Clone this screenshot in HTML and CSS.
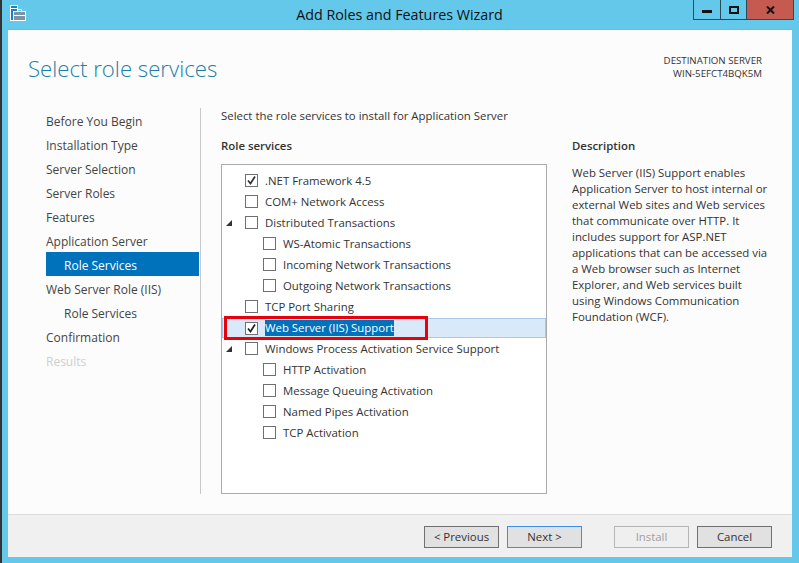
FILE: index.html
```html
<!DOCTYPE html>
<html lang="en">
<head>
<meta charset="utf-8">
<title>Add Roles and Features Wizard</title>
<link rel="stylesheet" href="styles.css">
</head>
<body>
<div class="window">
  <header class="titlebar">
    <svg class="appicon" width="16" height="16" viewBox="0 0 16 16">
      <rect x=".5" y=".5" width="7" height="15" fill="#1a7fc4" stroke="#fff"/>
      <path d="M1 3.500h6" stroke="#fff"/>
      <rect x="3.500" y="6.500" width="12" height="9" fill="#7f93a6" stroke="#fff"/>
      <path d="M7.500 6V4.500h4V6M4 10.500h11" fill="none" stroke="#fff"/>
    </svg>
    <div class="wintitle">Add Roles and Features Wizard</div>
    <div class="controls">
      <div class="ctl ctl-min"><span class="glyph-min"></span></div>
      <div class="ctl ctl-max"><span class="glyph-max"></span></div>
      <div class="ctl ctl-close">
        <svg width="9" height="8" viewBox="0 0 9 8"><path d="M1 .5l7 7M8 .5l-7 7" stroke="#111" stroke-width="2" fill="none"/></svg>
      </div>
    </div>
  </header>
  <main class="panel">
    <div class="content">
      <div class="head">
        <h1 class="pagetitle">Select role services</h1>
        <div class="dest">DESTINATION SERVER<br>WIN-5EFCT4BQK5M</div>
      </div>
      <div class="columns">
        <nav class="nav">
          <div class="navitem">Before You Begin</div>
          <div class="navitem">Installation Type</div>
          <div class="navitem">Server Selection</div>
          <div class="navitem">Server Roles</div>
          <div class="navitem">Features</div>
          <div class="navitem">Application Server</div>
          <div class="navitem sub active">Role Services</div>
          <div class="navitem">Web Server Role (IIS)</div>
          <div class="navitem sub">Role Services</div>
          <div class="navitem">Confirmation</div>
          <div class="navitem disabled">Results</div>
        </nav>
        <section class="main">
          <p class="intro">Select the role services to install for Application Server</p>
          <div class="split">
            <div class="services">
              <h2 class="label">Role services</h2>
              <div class="tree">
                <div class="row"><span class="arrow"></span><span class="cb checked"><svg width="11" height="11" viewBox="0 0 11 11"><path d="M2 5.500l2.500 3L9 1.500" fill="none" stroke="#333" stroke-width="1.700"/></svg></span><span>.NET Framework 4.5</span></div>
                <div class="row"><span class="arrow"></span><span class="cb"></span><span>COM+ Network Access</span></div>
                <div class="row"><span class="arrow on"></span><span class="cb"></span><span>Distributed Transactions</span></div>
                <div class="row child"><span class="arrow"></span><span class="cb"></span><span>WS-Atomic Transactions</span></div>
                <div class="row child"><span class="arrow"></span><span class="cb"></span><span>Incoming Network Transactions</span></div>
                <div class="row child"><span class="arrow"></span><span class="cb"></span><span>Outgoing Network Transactions</span></div>
                <div class="row"><span class="arrow"></span><span class="cb"></span><span>TCP Port Sharing</span></div>
                <div class="row selected"><span class="arrow"></span><span class="cb checked"><svg width="11" height="11" viewBox="0 0 11 11"><path d="M2 5.500l2.500 3L9 1.500" fill="none" stroke="#222" stroke-width="1.700"/></svg></span><span class="sel">Web Server (IIS) Support</span>
                  <div class="callout"></div>
                </div>
                <div class="row"><span class="arrow on"></span><span class="cb"></span><span>Windows Process Activation Service Support</span></div>
                <div class="row child"><span class="arrow"></span><span class="cb"></span><span>HTTP Activation</span></div>
                <div class="row child"><span class="arrow"></span><span class="cb"></span><span>Message Queuing Activation</span></div>
                <div class="row child"><span class="arrow"></span><span class="cb"></span><span>Named Pipes Activation</span></div>
                <div class="row child"><span class="arrow"></span><span class="cb"></span><span>TCP Activation</span></div>
              </div>
            </div>
            <aside class="desc">
              <h2 class="label">Description</h2>
              <p class="desctext">Web Server (IIS) Support enables<br>Application Server to host internal or<br>external Web sites and Web services<br>that communicate over HTTP. It<br>includes support for ASP.NET<br>applications that can be accessed via<br>a Web browser such as Internet<br>Explorer, and Web services built<br>using Windows Communication<br>Foundation (WCF).</p>
            </aside>
          </div>
        </section>
      </div>
    </div>
    <footer class="footer">
      <button class="btn">&lt; Previous</button>
      <button class="btn default">Next &gt;</button>
      <button class="btn off gap">Install</button>
      <button class="btn">Cancel</button>
    </footer>
  </main>
</div>
</body>
</html>
```
FILE: styles.css
```css
* { box-sizing: border-box; }
html, body { margin: 0; padding: 0; }
body {
  width: 799px;
  height: 563px;
  overflow: hidden;
  font-family: "Open Sans", "Noto Sans", sans-serif;
  font-size: 11.4px;
  color: #333;
}
.window {
  width: 799px;
  height: 563px;
  background: #63c8ea;
  border-left: 2px solid #333;
  padding: 0 7px 6px 6px;
  display: flex;
  flex-direction: column;
}
.titlebar {
  height: 29px;
  flex: none;
  display: flex;
  position: relative;
  justify-content: center;
  margin-right: -7px;
  margin-left: -6px;
}
.appicon { position: absolute; left: 8px; top: 5px; }
.wintitle { font-size: 14.3px; color: #111; line-height: 29px; padding-right: 2px; }
.controls {
  position: absolute;
  left: 691px;
  top: 0;
  height: 20px;
  display: flex;
  border: 1px solid #2c4a5c;
  border-top: 0;
}
.ctl { height: 19px; display: flex; align-items: center; justify-content: center; }
.ctl-min { width: 27px; border-right: 1px solid #2c4a5c; }
.ctl-max { width: 26px; border-right: 1px solid #2c4a5c; }
.ctl-close { width: 46px; background: #c55b50; }
.glyph-min { width: 10px; height: 3px; background: #111; margin-top: 4px; }
.glyph-max { width: 10px; height: 8px; border: 2px solid #111; }
.panel {
  flex: 1;
  background: #fcfcfc;
  display: flex;
  flex-direction: column;
  min-height: 0;
  border-top: 1px solid #8fb0c4;
}
.content { flex: 1; padding: 0 0 0 20px; min-height: 0; display: flex; flex-direction: column; }
.head { height: 77px; flex: none; display: flex; justify-content: space-between; padding-right: 30px; }
.pagetitle {
  margin: 23px 0 0;
  font-size: 22.2px;
  font-weight: 300;
  line-height: 32px;
  color: #1b7ea8;
}
.dest { margin-top: 24px; font-size: 9.7px; line-height: 13px; text-align: right; color: #333; }
.columns { display: flex; flex: 1; min-height: 0; margin-bottom: 20px; }
.nav { width: 173px; flex: none; margin-top: 1px; padding: 0 1px 0 18px; border-right: 1px solid #c8c8c8; }
.navitem { height: 24px; line-height: 28px; font-size: 12px; color: #444; white-space: nowrap; }
.navitem.sub { padding-left: 18px; }
.navitem.active { background: #0072bc; color: #fff; }
.navitem.disabled { color: #cfcfcf; }
.main { flex: 1; padding-left: 20px; display: flex; flex-direction: column; min-height: 0; }
.intro { margin: 0; line-height: 16px; height: 30px; padding-top: 1px; color: #333; }
.split { flex: 1; display: flex; min-height: 0; }
.services { width: 326px; flex: none; display: flex; flex-direction: column; }
.label { margin: 0; font-size: 11.4px; font-weight: 600; line-height: 16px; height: 27px; padding-top: 1px; color: #333; }
.tree {
  flex: 1;
  border: 1px solid #ababab;
  background: #fff;
  padding-top: 5px;
}
.row {
  height: 21px;
  display: flex;
  align-items: center;
  position: relative;
  white-space: nowrap;
}
.row.child { padding-left: 18px; }
.arrow { width: 23px; flex: none; position: relative; height: 21px; }
.arrow.on::after {
  content: "";
  position: absolute;
  left: 4px;
  top: 8px;
  width: 0;
  height: 0;
  border-left: 6px solid transparent;
  border-bottom: 6px solid #333;
}
.cb {
  width: 13px;
  height: 13px;
  flex: none;
  border: 1px solid #707070;
  background: #fff;
  margin-right: 7px;
  display: flex;
  align-items: center;
  justify-content: center;
}
.row.selected {
  background: #d9e9fa;
  outline: 1px solid #a9c9ec;
  outline-offset: -1px;
  height: 20px;
  margin-top: 1px;
}
.sel { background: #0072bc; color: #fff; line-height: 16px; }
.callout {
  position: absolute;
  left: 2px;
  top: -2px;
  width: 204px;
  height: 24px;
  border: 3px solid #e8000d;
}
.desc { flex: 1; padding-left: 25px; }
.desctext { margin: 1px 0 0; line-height: 16px; color: #333; }
.footer {
  height: 43px;
  flex: none;
  background: #f0f0f0;
  border-top: 1px solid #dcdcdc;
  display: flex;
  align-items: center;
  padding: 1px 20px 0 416px;
  gap: 8px;
}
.btn {
  width: 75px;
  height: 22px;
  padding: 0;
  background: #e1e1e1;
  border: 1px solid #707070;
  font: inherit;
  color: #333;
}
.btn.default { border-color: #3c8fe6; }
.btn.off { border-color: #b5b5b5; color: #a0a0a0; background: #efefef; }
.btn.gap { margin-left: 24px; }
```
